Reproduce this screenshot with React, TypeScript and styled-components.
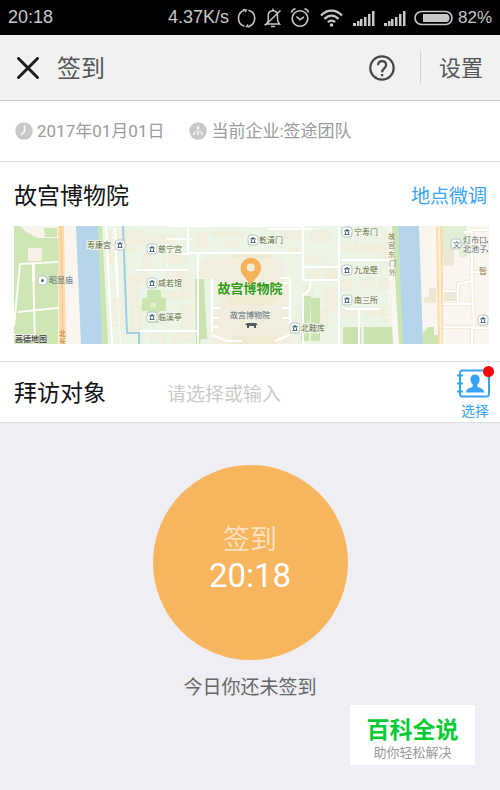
import React from "react";
import styled, { createGlobalStyle } from "styled-components";

const GlobalStyle = createGlobalStyle`
  * { box-sizing: border-box; }
  body {
    margin: 0;
    background: #efeef4;
    font-family: Roboto, "Noto Sans CJK SC", sans-serif;
  }
  button, input { font: inherit; border: 0; padding: 0; background: none; }
  button { cursor: pointer; }
`;

const Page = styled.div`
  min-height: 100vh;
  display: flex;
  flex-direction: column;
  background: #efeef4;
`;

const StatusBar = styled.div`
  display: flex;
  align-items: center;
  justify-content: space-between;
  height: 35px;
  padding: 0 8px;
  background: #000;
  color: #c8c8c8;
  font: 18px/35px "Liberation Sans", sans-serif;
`;

const StatusGroup = styled.div`
  display: flex;
  align-items: center;
`;

const StatusIcons = styled.svg`
  display: block;
  margin-left: 8px;
`;

const Battery = styled.span`
  margin-left: 5px;
  font-size: 17px;
`;

const Header = styled.header`
  display: flex;
  align-items: center;
  height: 66px;
  padding: 0 17px;
  background: #f1f1f1;
  border-bottom: 1px solid #c9c9c9;
  color: #555658;
`;

const IconButton = styled.button`
  display: flex;
  color: ${(p) => p.color};
`;

const Title = styled.h1`
  flex: 1;
  margin: 0 0 0 18px;
  padding-top: 3px;
  font-size: 24px;
  line-height: 36px;
  font-weight: 400;
`;

const SettingsButton = styled.button`
  margin-left: 25px;
  padding: 3px 0 0 18px;
  border-left: 1px solid #d2d2d2;
  color: #555658;
  font-size: 22px;
  line-height: 30px;
`;

const InfoRow = styled.div`
  display: flex;
  align-items: center;
  gap: 25px;
  height: 61px;
  padding: 0 15px;
  background: #fff;
  border-bottom: 1px solid #dedede;
`;

const InfoItem = styled.div`
  display: flex;
  align-items: center;
  gap: 4px;
  color: #9b9b9b;
  font-size: 17px;
  line-height: 24px;
`;

const PlaceSection = styled.section`
  padding: 0 11px 17px 14px;
  background: #fff;
  border-bottom: 1px solid #dedede;
`;

const PlaceHeader = styled.div`
  display: flex;
  align-items: center;
  justify-content: space-between;
  height: 64px;
  padding: 6px 2px 0 0;
`;

const PlaceName = styled.h2`
  margin: 0;
  font-size: 23px;
  line-height: 34px;
  font-weight: 400;
  color: #111;
`;

const AdjustLink = styled.a`
  color: #38a4f8;
  font-size: 19px;
  line-height: 28px;
  text-decoration: none;
`;

const Map = styled.svg`
  display: block;
  width: 100%;
  height: 118px;
`;

const VisitRow = styled.div`
  display: flex;
  align-items: center;
  height: 61px;
  padding: 0 4px 0 14px;
  background: #fff;
  border-bottom: 1px solid #dedede;
`;

const VisitLabel = styled.label`
  width: 153px;
  padding-top: 4px;
  color: #111;
  font-size: 23px;
  line-height: 34px;
`;

const VisitInput = styled.input`
  flex: 1;
  min-width: 0;
  height: 34px;
  padding-top: 4px;
  outline: none;
  color: #333;
  font-size: 19px;
  &::placeholder { color: #cacaca; opacity: 1; }
`;

const PickButton = styled.button`
  display: flex;
  flex-direction: column;
  align-items: center;
  color: #38a4f8;
  font-size: 14px;
  line-height: 18px;
`;

const SignArea = styled.main`
  display: flex;
  flex-direction: column;
  align-items: center;
  padding: 42px 16px 0;
`;

const SignButton = styled.button`
  display: flex;
  flex-direction: column;
  align-items: center;
  width: 195px;
  height: 195px;
  padding-top: 56px;
  border-radius: 50%;
  background: #f7b55e;
  color: #fff;
`;

const SignLabel = styled.span`
  color: #fde1bd;
  font-size: 27px;
  line-height: 38px;
`;

const SignTime = styled.span`
  font-size: 33px;
  line-height: 34px;
`;

const SignHint = styled.p`
  margin: 14px 0 0;
  color: #666;
  font-size: 19px;
  line-height: 28px;
`;

const Watermark = styled.aside`
  align-self: flex-end;
  display: flex;
  flex-direction: column;
  align-items: center;
  width: 125px;
  height: 60px;
  margin: 3px 25px 25px 0;
  padding-top: 11px;
  background: #fff;
`;

const WatermarkName = styled.strong`
  color: #07cb35;
  font-size: 23px;
  line-height: 30px;
  font-weight: 700;
`;

const WatermarkNote = styled.span`
  color: #999;
  font-size: 13px;
  line-height: 14px;
`;

const signalBars = [
  [0, 3],
  [4, 5],
  [7, 7],
  [11, 9],
  [15, 12],
  [19, 15],
];

function Signal({ x }: { x: number }) {
  return (
    <g fill="#c8c8c8">
      {signalBars.map(([dx, h]) => (
        <rect key={dx} x={x + dx} y={20 - h} width={dx === 0 ? 3 : 2.5} height={h} />
      ))}
    </g>
  );
}

function StatusDrawings() {
  return (
    <StatusIcons width="216" height="24" viewBox="0 0 216 24" fill="none" stroke="#c8c8c8" strokeWidth="1.6" aria-hidden="true">
      <path d="M7.500 4.200C4 5.200 1.500 8.500 1.500 12.300c0 3.800 2.400 7 6 8M11.500 4.300c3.700 1 6.200 4.200 6.200 8 0 3.900-2.500 7.100-6.200 8.100" />
      <path d="M6.200 3.300l3.300.6-1.600 2.300M12.800 21.200l-3.300-.6 1.600-2.300" strokeWidth="1.200" />
      <path d="M29 18h13.500c-1.500-1.500-2-3-2-5V9.500c0-3-1.500-4.500-4.500-5-3 .5-4.800 2.500-4.800 5V14c0 1.500-.7 3-2.200 4zM34 20.500h4M28 19.500L43.500 4.500M36 4V2.500" strokeWidth="1.400" />
      <circle cx="63" cy="12.500" r="7.800" />
      <path d="M59.500 10.500L63 13.800l4-3M54.500 6.500c.5-2 2-3.300 4-3.700M71.500 6.500c-.5-2-2-3.300-4-3.700" />
      <g strokeWidth="2.300">
        <path d="M84 9.500c6-6.600 15-6.600 21 0M87.500 13c4-4.600 10-4.600 14 0M91 16.300c2-2.300 5-2.300 7 0" />
      </g>
      <circle cx="94.500" cy="19" r="1.800" fill="#c8c8c8" stroke="none" />
      <g stroke="none">
        <Signal x={116} />
        <Signal x={147} />
      </g>
      <rect x="178" y="5.500" width="37" height="13" rx="6.500" strokeWidth="1.600" />
      <path d="M186 8h23.500c4 0 4 8 0 8H186z" fill="#c8c8c8" stroke="none" />
    </StatusIcons>
  );
}

const museums: { x: number; y: number; label?: string; tx: number }[] = [
  { x: 106, y: 19, label: "寿康宫", tx: 73 },
  { x: 138, y: 23, label: "慈宁宫", tx: 144 },
  { x: 138, y: 57, label: "咸若馆", tx: 144 },
  { x: 138, y: 91, label: "临溪亭", tx: 144 },
  { x: 239, y: 14, label: "乾清门", tx: 245 },
  { x: 333, y: 6, label: "宁寿门", tx: 340 },
  { x: 333, y: 44, label: "九龙壁", tx: 340 },
  { x: 333, y: 74, label: "南三所", tx: 340 },
  { x: 281, y: 102, label: "北鞍库", tx: 287 },
  { x: 469, y: 94, tx: 0 },
];

const courts = [
  [96, 6, 8, 30], [112, 6, 10, 20], [120, 5, 10, 12], [132, 9, 28, 7], [129, 28, 9, 14],
  [150, 29, 22, 9], [96, 74, 13, 26], [115, 50, 9, 28], [125, 44, 8, 12], [153, 45, 18, 7],
  [168, 48, 8, 24], [117, 80, 10, 24], [150, 66, 18, 8], [168, 79, 10, 22], [182, 8, 11, 12],
  [198, 6, 30, 4], [211, 15, 14, 6], [193, 30, 10, 24], [184, 35, 7, 13], [270, 4, 20, 8],
  [275, 22, 13, 6], [297, 5, 19, 10], [292, 31, 20, 5], [294, 44, 11, 9], [310, 43, 12, 9],
  [291, 60, 8, 8], [311, 62, 11, 22], [328, 17, 15, 9], [348, 18, 16, 7], [365, 20, 8, 16],
  [327, 55, 11, 9], [347, 53, 13, 7], [366, 52, 8, 11], [328, 84, 15, 7], [350, 84, 18, 6],
  [306, 85, 8, 17], [137, 108, 14, 7], [159, 108, 19, 7], [369, 80, 7, 16],
];

function MapView() {
  return (
    <Map viewBox="0 0 475 118" preserveAspectRatio="xMidYMid slice" role="img" aria-label="故宫博物院地图" fontFamily='"Noto Sans CJK SC", sans-serif'>
      <rect width="475" height="118" fill="#faf6ef" />
      <path d="M0 0h44v118H0z" fill="#cde6b3" />
      <path d="M5 0h39v12H24L14 7z" fill="#f8f3eb" />
      <path d="M30 2h13v9H31z" fill="#cde6b3" />
      <path d="M14 22h14v13H14z" fill="#f6f0e5" />
      <path d="M5 38l39-2M6 38L0 100M19 38l2 80M4 86l40-4M0 109h20" stroke="#fffdf7" strokeWidth="2" fill="none" />
      <path d="M18 38h3v18h-3z" fill="#fffdf7" />
      <path d="M44 0h6l2 118h-7z" fill="#fbdcaf" />
      <path d="M47 0l2 118" stroke="#f3c58a" strokeWidth="1" />

      <path d="M84 0h296l8 118H88z" fill="#ecf4e5" />
      <path d="M84 0h4l6 118h-7z" fill="#cae5b0" />
      <path d="M62 0h22l4 118H67z" fill="#b3d4e9" />
      <path d="M109 0l4 107h12v11" stroke="#9fcce7" strokeWidth="2" fill="none" />

      <g fill="#f1efde" stroke="#efebd8" strokeWidth="1">
        {courts.map(([x, y, w, h]) => (
          <rect key={`${x}-${y}`} x={x} y={y} width={w} height={h} />
        ))}
      </g>
      <path d="M205 32h64v20h8v66h-79V84h7z" fill="#f2eedd" />
      <path d="M216 32v-6h43v6M210 68h56l-9 11h-40zM219 109h44v9h-44z" fill="#f0e9d3" />
      <path d="M133 64h14v8h5v13h-6v12h-12V85h-6V72h5z" fill="#cae5b0" />
      <path d="M137 77h5v5h-5z" fill="#efe9cf" />
      <path d="M181 53h9l3 60h-6l-1 5h-4zM288 70h9l-2 45h-8zM297 72h9v43h-9zM329 101h18v17h-18zM350 101h32v17h-32z" fill="#c9e4b0" />

      <g stroke="#fff" fill="none" strokeWidth="2">
        <path d="M101 2l3 67M92 0l6 118M121 44h53M174 0v28h-13M176 27h113V0M184 28v90M175 0h43M155 0h135M125 105h59M153 13h25M289 26v28h36M325 0v118M289 41h36M327 34h51M331 83h34M345 83v35M289 68c8 0 8-16 8-14M289 68v50M254 3h45M266 52h10M276 52v54M266 57h10M198 53v53M198 82h8M198 92h7M198 101h7M268 82h8M268 92h8M198 109l15 6h15M276 109l-15 6" />
      </g>
      <path d="M153 18v23M98 0l9 118M374 0l2 98" stroke="#fff" strokeWidth="1" strokeDasharray="3 2" fill="none" />

      <path d="M374 0h4l7 118h-6z" fill="#faf6ef" />
      <path d="M378 0h6l6 118h-5z" fill="#cae5b0" />
      <path d="M384 0h21l4 118h-20z" fill="#b3d4e9" />
      <path d="M409 107l5-6h6v8h5v9h-16z" fill="#cae5b0" />
      <path d="M429 0h24v31h-8v-8h-16z" fill="#e1efd7" />
      <path d="M429 22h11v18h-10zM415 62h7v15h-12v-6h5zM430 66h14v9h-14z" fill="#ece8d4" />
      <path d="M430 65h14v-7l14-3V6h-8M444 62v15h14M429 78h30M458 55l2 47h15M429 101h31M458 102v16M454 46h21M458 16h17M456 4h19" stroke="#f5e9d8" strokeWidth="4" fill="none" />
      <path d="M430 65h14v-7l14-3V6h-8M444 62v15h14M429 78h30M458 55l2 47h15M429 101h31M458 102v16M454 46h21M458 16h17M456 4h19" stroke="#fff" strokeWidth="2" fill="none" />
      <path d="M422 0h7v118h-5z" fill="#fbdcaf" />
      <path d="M425 0l2 118" stroke="#fff0d4" strokeWidth="2" />

      {museums.map((m) => (
        <g key={`${m.x}-${m.y}`}>
          <rect x={m.x - 5} y={m.y - 5} width="10" height="10" rx="3" fill="#fff" stroke="#b9c4c8" />
          <path d={`M${m.x - 2.500} ${m.y - 1}l2.500-1.500 2.500 1.500zM${m.x - 1.500} ${m.y}v2.500M${m.x + 1.500} ${m.y}v2.500M${m.x - 2.500} ${m.y + 2.500}h5`} fill="#4b6c7e" stroke="#4b6c7e" strokeWidth="1" />
          {m.label && (
            <text x={m.tx} y={m.y + 3} fontSize="8" fill="#5c6a38" stroke="#f5f8ef" strokeWidth="2" paintOrder="stroke">
              {m.label}
            </text>
          )}
        </g>
      ))}
      <rect x="24" y="50" width="9" height="9" rx="3" fill="#fff" stroke="#b9c4c8" />
      <circle cx="28.500" cy="54.500" r="1.500" fill="#4b6c7e" />
      <text x="35" y="57" fontSize="8" fill="#4e6a7c">昭显庙</text>
      <rect x="437" y="13" width="10" height="10" rx="3" fill="#fff" stroke="#b9c4c8" />
      <text x="439" y="21" fontSize="7" fill="#4b6c7e">文</text>
      <g fontSize="8" fill="#596c7a">
        <text x="449 457 465 449 457 465" y="17 17 17 26 26 26">灯市口北池子</text>
        <text x="216" y="92">故宫博物院</text>
      </g>
      <path d="M473 15l1 2M473 24l1 2" stroke="#596c7a" strokeWidth="1" />
      <text x="465" y="48" fontSize="8" fill="#8b755a">智</text>
      <text x="374 374 374 375 375" y="13 22 31 40 49" fontSize="7" fill="#8d7b58">故宫东门外</text>
      <text x="45 45" y="110 118" fontSize="7" fill="#b27a30">北长</text>
      <path d="M233 97h9l2 2h-2v3h-2v-2h-5v2h-2v-3h-2z" fill="#505c62" />
      <text x="236" y="67" textAnchor="middle" fontSize="13" fontWeight="700" fill="#2f9b12" stroke="#f4f7e8" strokeWidth="2" paintOrder="stroke">故宫博物院</text>
      <path d="M236.500 60c-3-7-10-11-10-18a10.300 10.300 0 1 1 20.600 0c0 7-7.600 11-10.600 18z" fill="#f7b159" />
      <circle cx="236.800" cy="41.500" r="4" fill="#f1ecdb" />
      <text x="1" y="116" fontSize="8" fontWeight="500" fill="#333" stroke="#edf3e5" strokeWidth="1" paintOrder="stroke">高德地图</text>
    </Map>
  );
}

export default function App() {
  return (
    <Page>
      <GlobalStyle />
      <StatusBar>
        <span>20:18</span>
        <StatusGroup>
          <span>4.37K/s</span>
          <StatusDrawings />
          <Battery>82%</Battery>
        </StatusGroup>
      </StatusBar>

      <Header>
        <IconButton type="button" color="#1d1d1d" aria-label="关闭">
          <svg width="22" height="22" viewBox="0 0 22 22" stroke="currentColor" strokeWidth="3" strokeLinecap="round">
            <path d="M1.500 1.500l19 19M20.500 1.500l-19 19" />
          </svg>
        </IconButton>
        <Title>签到</Title>
        <IconButton type="button" color="#454545" aria-label="帮助">
          <svg width="26" height="26" viewBox="0 0 26 26" fill="none" stroke="currentColor" strokeWidth="2.200">
            <circle cx="13" cy="13" r="11.700" />
            <path d="M9 10.300c0-2.500 1.600-4.100 4-4.100s4.100 1.500 4.100 3.700c0 3.500-4 3.400-4 7.300" />
            <path d="M11.900 19h2.300v2.200h-2.300z" fill="currentColor" stroke="none" />
          </svg>
        </IconButton>
        <SettingsButton type="button">设置</SettingsButton>
      </Header>

      <InfoRow>
        <InfoItem>
          <svg width="18" height="18" viewBox="0 0 18 18" aria-hidden="true">
            <circle cx="9" cy="9" r="8.700" fill="#c8c8c8" />
            <path d="M9.500 3.500v6L6 13" fill="none" stroke="#fff" strokeWidth="1.500" />
          </svg>
          <span>2017年01月01日</span>
        </InfoItem>
        <InfoItem>
          <svg width="18" height="18" viewBox="0 0 18 18" aria-hidden="true">
            <circle cx="9" cy="9" r="8.700" fill="#c8c8c8" />
            <path d="M9 6v4M5 12v-2h8v2M9 10v2" fill="none" stroke="#fff" strokeWidth=".7" />
            <path d="M7.800 4.500h2.400v2.400H7.800zM4.300 11.500h1.600v1.600H4.300zM8.200 11.500h1.600v1.600H8.200zM12.100 11.500h1.600v1.600h-1.600z" fill="#fff" />
          </svg>
          <span>当前企业:签途团队</span>
        </InfoItem>
      </InfoRow>

      <PlaceSection>
        <PlaceHeader>
          <PlaceName>故宫博物院</PlaceName>
          <AdjustLink href="#adjust">地点微调</AdjustLink>
        </PlaceHeader>
        <MapView />
      </PlaceSection>

      <VisitRow>
        <VisitLabel htmlFor="visit-target">拜访对象</VisitLabel>
        <VisitInput id="visit-target" type="text" placeholder="请选择或输入" />
        <PickButton type="button">
          <svg width="42" height="38" viewBox="0 0 42 38" fill="none" aria-hidden="true">
            <rect x="6" y="6.500" width="29" height="26" rx="2.500" stroke="#38a4f8" strokeWidth="2" />
            <path d="M3 11.500h6M3 19.500h6M3 27.500h6" stroke="#38a4f8" strokeWidth="1.800" />
            <path d="M21 10.500c-3 0-4.800 2.200-4.500 5.400.2 2 1 3.600 2.300 4.600v1.800c-1.500 2-6.300 1.500-7 6.200h18.500c-.7-4.700-5.500-4.200-7-6.200v-1.800c1.300-1 2.100-2.600 2.300-4.600.3-3.200-1.600-5.400-4.600-5.400z" fill="#38a4f8" />
            <circle cx="34.500" cy="7.500" r="5.500" fill="#f90505" />
          </svg>
          选择
        </PickButton>
      </VisitRow>

      <SignArea>
        <SignButton type="button">
          <SignLabel>签到</SignLabel>
          <SignTime>20:18</SignTime>
        </SignButton>
        <SignHint>今日你还未签到</SignHint>
      </SignArea>

      <Watermark>
        <WatermarkName>百科全说</WatermarkName>
        <WatermarkNote>助你轻松解决</WatermarkNote>
      </Watermark>
    </Page>
  );
}
